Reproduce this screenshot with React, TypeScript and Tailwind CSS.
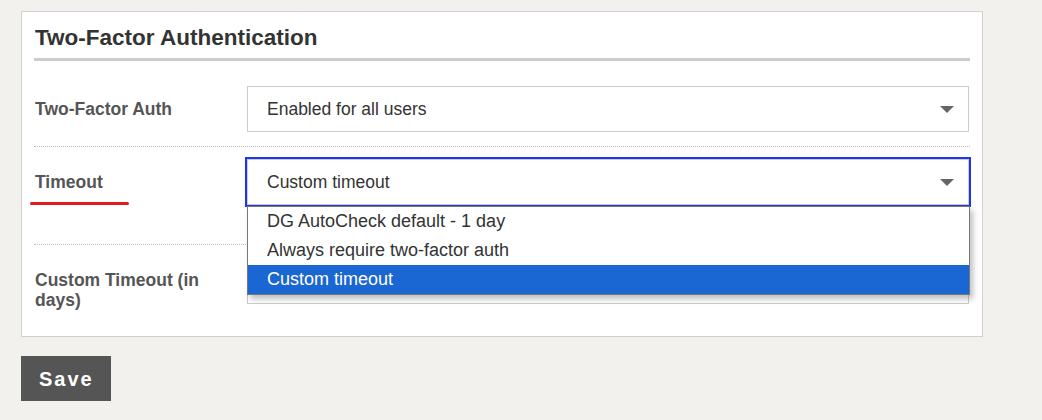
import { useState } from "react";

const options = [
  "DG AutoCheck default - 1 day",
  "Always require two-factor auth",
  "Custom timeout",
];

function Arrow() {
  return (
    <svg width="14" height="7" viewBox="0 0 14 7" className="shrink-0">
      <path d="M0 0 H14 L7 7 Z" fill="#666" />
    </svg>
  );
}

function SelectBox({
  value,
  focused = false,
}: {
  value: string;
  focused?: boolean;
}) {
  return (
    <div
      className={
        focused
          ? "flex h-[46px] w-[722px] items-center justify-between border border-[#ccc] bg-white pl-[19px] pr-[14px] outline-2 outline-[#1f33f0]"
          : "flex h-[46px] w-[722px] items-center justify-between border border-[#ccc] bg-white pl-[19px] pr-[14px]"
      }
    >
      <span className="text-[17.5px] text-[#333]">{value}</span>
      <Arrow />
    </div>
  );
}

export default function App() {
  const [selected] = useState(2);

  return (
    <div className="min-h-[420px] bg-[#f2f1ee] pl-[21px] pt-[11px] font-['Liberation_Sans',Arial,sans-serif]">
      <div className="w-[962px] border border-[#d0d0d0] bg-white px-[12px]">
        <h2 className="border-b-[3px] border-[#cccccc] pb-[7px] pl-px pt-[12px] text-[22.5px] leading-[27px] font-bold text-[#333]">
          Two-Factor Authentication
        </h2>

        <div className="flex items-center border-b border-dotted border-[#bbb] pb-[14px] pt-[25px]">
          <div className="w-[213px] pl-px text-[17.5px] font-bold text-[#555]">
            Two-Factor Auth
          </div>
          <SelectBox value="Enabled for all users" />
        </div>

        <div className="flex items-center border-b border-dotted border-[#bbb] pb-[39px] pt-[12px]">
          <div className="relative w-[213px] pl-px text-[17.5px] font-bold text-[#555]">
            Timeout
            <span className="absolute left-[-4px] top-[33px] h-[3px] w-[99px] rounded-full bg-[#e31b1b]" />
          </div>
          <div className="relative">
            <SelectBox value={options[selected]} focused />
            <ul className="absolute left-0 top-[47px] z-10 w-[723px] border border-[#777] bg-white shadow-[3px_4px_6px_rgba(0,0,0,0.25)]">
              {options.map((opt, i) => (
                <li
                  key={opt}
                  className={
                    i === selected
                      ? "flex h-[29px] items-center bg-[#1a66d2] pl-[19px] text-[18px] text-white"
                      : "flex h-[29px] items-center pl-[19px] text-[18px] text-[#333]"
                  }
                >
                  {opt}
                </li>
              ))}
            </ul>
          </div>
        </div>

        <div className="flex items-start pb-[32px] pt-[13px]">
          <div className="h-[46px] w-[213px] pl-px pr-[36px] pt-[12px] text-[17.5px] leading-[20px] font-bold text-[#555]">
            Custom Timeout (in days)
          </div>
          <div className="h-[46px] w-[722px] border border-[#ccc] bg-white" />
        </div>
      </div>

      <button className="mt-[19px] flex h-[45px] w-[90px] items-center pl-[18px] text-[20px] font-bold tracking-[2px] text-white bg-[#555]">
        Save
      </button>
    </div>
  );
}
